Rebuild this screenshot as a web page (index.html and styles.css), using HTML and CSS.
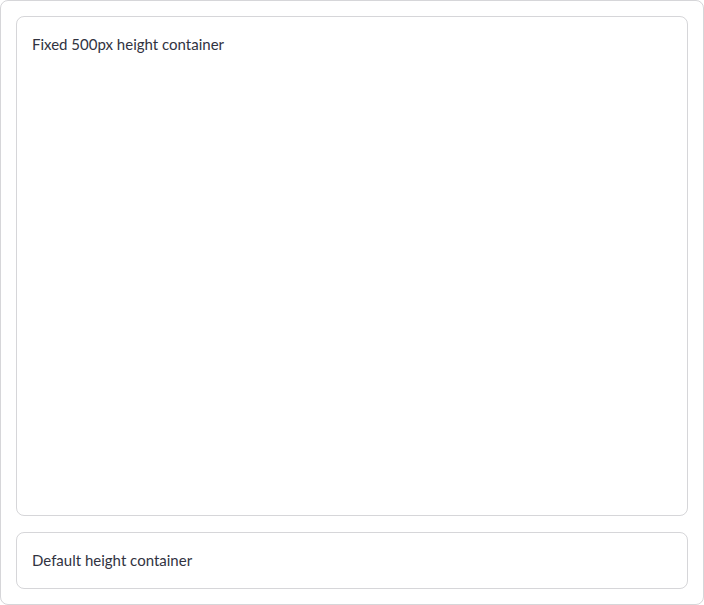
FILE: index.html
```
<!DOCTYPE html>
<html>
<head>
<meta charset="utf-8">
<link rel="stylesheet" href="styles.css">
</head>
<body>
<div class="outer">
  <div class="box fixed"><p>Fixed 500px height container</p></div>
  <div class="box"><p>Default height container</p></div>
</div>
</body>
</html>
```
FILE: styles.css
```
html, body { margin: 0; padding: 0; background: #fff; }
body { font-family: Lato, "Source Sans Pro", sans-serif; font-size: 15px; color: rgb(49, 51, 63); }
.outer {
  box-sizing: border-box;
  width: 704px;
  height: 605px;
  border: 1px solid rgba(49, 51, 63, 0.2);
  border-radius: 8px;
  padding: 15px;
  display: flex;
  flex-direction: column;
  gap: 16px;
}
.box {
  border: 1px solid rgba(49, 51, 63, 0.2);
  border-radius: 8px;
  padding: 15px;
}
.fixed { box-sizing: border-box; height: 500px; flex: none; }
.box p { margin: 0; line-height: 25px; }
```
